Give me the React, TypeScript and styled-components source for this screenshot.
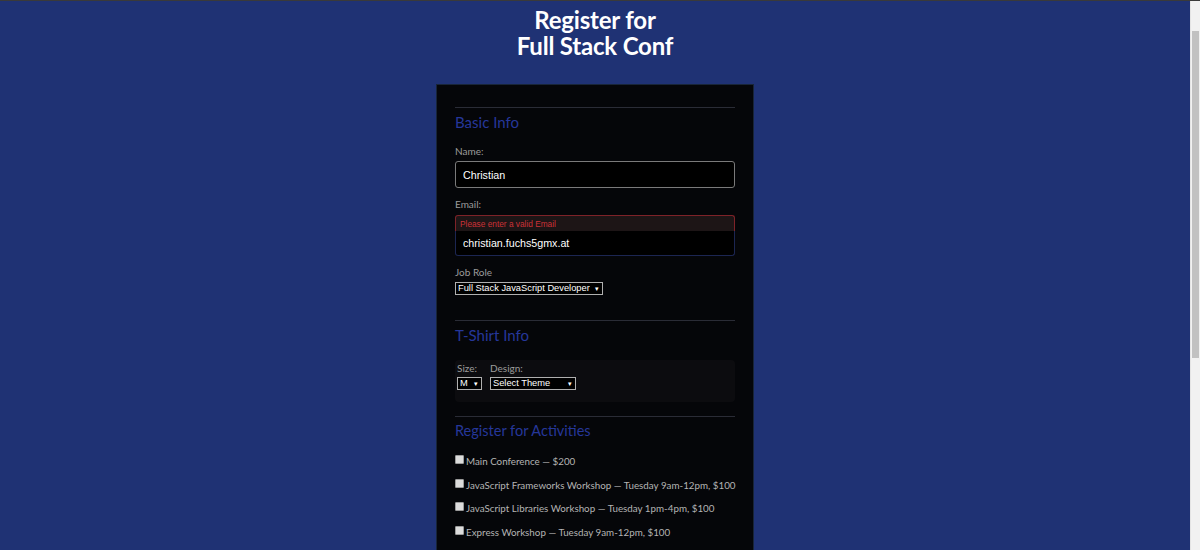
import React, { useState } from 'react';
import styled, { createGlobalStyle } from 'styled-components';

const GlobalStyle = createGlobalStyle`
  html, body {
    height: 100%;
  }
  body {
    margin: 0;
    background: #1f3274;
    border-top: 1px solid #3a3a3a;
    box-sizing: border-box;
    font-family: 'Lato', 'Open Sans', sans-serif;
    overflow: hidden;
  }
  #root {
    height: 100%;
  }
`;

interface Activity {
  name: string;
  when?: string;
  cost: number;
}

const activities: Activity[] = [
  { name: 'Main Conference', cost: 200 },
  { name: 'JavaScript Frameworks Workshop', when: 'Tuesday 9am-12pm', cost: 100 },
  { name: 'JavaScript Libraries Workshop', when: 'Tuesday 1pm-4pm', cost: 100 },
  { name: 'Express Workshop', when: 'Tuesday 9am-12pm', cost: 100 },
  { name: 'Node.js Workshop', when: 'Tuesday 1pm-4pm', cost: 100 },
  { name: 'Build tools Workshop', when: 'Wednesday 9am-12pm', cost: 100 },
];

const App: React.FC = () => {
  const [name, setName] = useState('Christian');
  const [email, setEmail] = useState('christian.fuchs5gmx.at');

  return (
    <Window>
      <GlobalStyle />
      <Page>
        <Title>
          Register for
          <br />
          Full Stack Conf
        </Title>
        <Card>
          <Section $after={25}>
            <Heading>Basic Info</Heading>
            <Label htmlFor="name">Name:</Label>
            <TextInput id="name" value={name} onChange={(e) => setName(e.target.value)} />

            <Label htmlFor="mail" $gap={9}>
              Email:
            </Label>
            <ErrorBox>Please enter a valid Email</ErrorBox>
            <TextInput id="mail" $invalid value={email} onChange={(e) => setEmail(e.target.value)} />

            <Label htmlFor="title" $gap={9}>
              Job Role
            </Label>
            <SelectWrap>
              <Select id="title" defaultValue="full-stack js developer">
                <option value="full-stack js developer">Full Stack JavaScript Developer</option>
                <option value="front-end developer">Front End Developer</option>
                <option value="back-end developer">Back End Developer</option>
                <option value="designer">Designer</option>
                <option value="other">Other</option>
              </Select>
            </SelectWrap>
          </Section>

          <Section $after={14}>
            <Heading>T-Shirt Info</Heading>
            <ShirtBox>
              <ShirtField>
                <SmallLabel htmlFor="size">Size:</SmallLabel>
                <SelectWrap>
                  <Select id="size" defaultValue="medium" $width={25}>
                    <option value="small">S</option>
                    <option value="medium">M</option>
                    <option value="large">L</option>
                    <option value="extra large">XL</option>
                  </Select>
                </SelectWrap>
              </ShirtField>
              <ShirtField>
                <SmallLabel htmlFor="design">Design:</SmallLabel>
                <SelectWrap>
                  <Select id="design" defaultValue="" $width={86}>
                    <option value="">Select Theme</option>
                    <option value="js puns">Theme - JS Puns</option>
                    <option value="heart js">Theme - I ♥ JS</option>
                  </Select>
                </SelectWrap>
              </ShirtField>
            </ShirtBox>
          </Section>

          <Section>
            <Heading $size={14.5}>Register for Activities</Heading>
            <ActivityList>
              {activities.map((a) => (
                <ActivityRow key={a.name}>
                  <Check type="checkbox" />
                  <span>
                    {a.name} — {a.when ? `${a.when}, ` : ''}${a.cost}
                  </span>
                </ActivityRow>
              ))}
            </ActivityList>
          </Section>
        </Card>
      </Page>
      <ScrollRail>
        <ScrollThumb />
      </ScrollRail>
    </Window>
  );
};

const Window = styled.div`
  display: flex;
  height: 100%;
`;

const Page = styled.main`
  flex: 1;
  display: flex;
  flex-direction: column;
  align-items: center;
  overflow: hidden;
`;

const ScrollRail = styled.div`
  width: 10px;
  flex-shrink: 0;
  padding-top: 30px;
  box-sizing: border-box;
  background: #f1f1f1;
  border-left: 1px solid #e4e4e4;
`;

const ScrollThumb = styled.div`
  height: 327px;
  margin: 0 1px;
  background: #c1c1c1;
`;

const Title = styled.h1`
  margin: 6px 0 0;
  color: #ffffff;
  font-family: 'Lato', sans-serif;
  font-weight: 700;
  font-size: 24px;
  line-height: 26px;
  text-align: center;
  letter-spacing: -0.2px;
`;

const Card = styled.form`
  flex-shrink: 0;
  margin-top: 25px;
  width: 280px;
  padding: 22px 18px 20px;
  background: #050609;
  border: 1px solid #182538;
`;

const Section = styled.section<{ $after?: number }>`
  display: flex;
  flex-direction: column;
  align-items: flex-start;
  margin-bottom: ${(p) => p.$after ?? 0}px;
  border-top: 1px solid #2a2c36;
`;

const Heading = styled.h2<{ $size?: number }>`
  margin: 4px 0 12px;
  color: #25379a;
  font-weight: 400;
  font-size: ${(p) => p.$size ?? 15}px;
  line-height: 20px;
`;

const Label = styled.label<{ $gap?: number }>`
  margin-top: ${(p) => p.$gap ?? 0}px;
  margin-bottom: 3px;
  color: #9c9c9c;
  font-size: 10px;
  line-height: 14px;
`;

const SmallLabel = styled.label`
  color: #9c9c9c;
  font-size: 10px;
  line-height: 14px;
  margin-bottom: 2px;
`;

const TextInput = styled.input<{ $invalid?: boolean }>`
  box-sizing: border-box;
  width: 100%;
  height: ${(p) => (p.$invalid ? 25 : 27)}px;
  margin: 0;
  padding: 0 7px;
  background: #000;
  color: #fff;
  font-family: 'Liberation Sans', Arial, sans-serif;
  font-size: 10.7px;
  border: 1px solid ${(p) => (p.$invalid ? '#1c2652' : '#7a7a7a')};
  border-radius: ${(p) => (p.$invalid ? '0 0 3px 3px' : '3px')};
  border-top-width: ${(p) => (p.$invalid ? 0 : 1)}px;
  outline: none;
`;

const ErrorBox = styled.div`
  box-sizing: border-box;
  width: 100%;
  height: 16px;
  margin-top: 1px;
  padding: 0 4px;
  background: #1d1516;
  border: 1px solid #7e2228;
  border-bottom: none;
  border-radius: 3px 3px 0 0;
  color: #cc3236;
  font-family: 'Liberation Sans', Arial, sans-serif;
  font-size: 8.3px;
  line-height: 16px;
`;

const SelectWrap = styled.span`
  position: relative;
  display: inline-flex;
  &::after {
    content: '▾';
    position: absolute;
    right: 4px;
    top: 0;
    color: #fff;
    font-size: 7px;
    line-height: 13px;
    pointer-events: none;
  }
`;

const Select = styled.select<{ $width?: number }>`
  appearance: none;
  box-sizing: border-box;
  ${(p) => (p.$width ? `width: ${p.$width}px;` : '')}
  height: 13px;
  margin: 0;
  padding: 0 12px 0 2px;
  background: #000;
  color: #fff;
  border: 1px solid #b0b0b0;
  border-radius: 0;
  font-family: 'Liberation Sans', Arial, sans-serif;
  font-size: 9.3px;
  line-height: 11px;
  outline: none;
`;

const ShirtBox = styled.div`
  box-sizing: border-box;
  width: 100%;
  height: 42px;
  margin-top: 3px;
  padding: 1px 2px;
  display: flex;
  gap: 8px;
  background: #0c0c0f;
  border-radius: 4px;
`;

const ShirtField = styled.div`
  display: flex;
  flex-direction: column;
  align-items: flex-start;
`;

const ActivityList = styled.div`
  display: flex;
  flex-direction: column;
  gap: 9.7px;
  margin-top: 1px;
`;

const ActivityRow = styled.label`
  display: flex;
  align-items: flex-start;
  gap: 2px;
  color: #b4b4b4;
  font-size: 9.8px;
  line-height: 14px;
  white-space: nowrap;
`;

const Check = styled.input`
  appearance: none;
  box-sizing: border-box;
  width: 9px;
  height: 9px;
  margin: 1px 0 0 0;
  background: #dcdcdc;
  border: 1px solid #9a9a9a;
  border-radius: 1px;
`;

export default App;
